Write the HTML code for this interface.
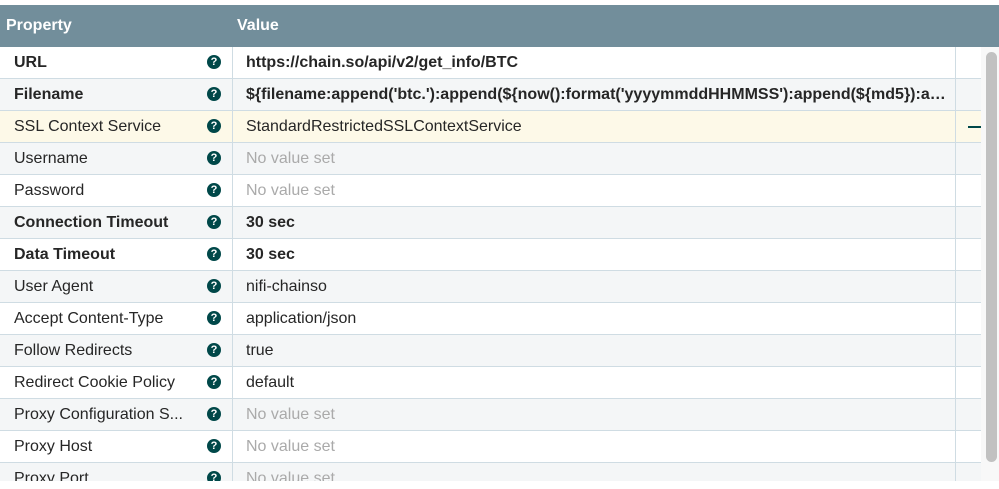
<!DOCTYPE html>
<html><head><style>
body{margin:0;width:999px;height:489px;overflow:hidden;background:#fff;font-family:"Liberation Sans",sans-serif;}
.hd{position:absolute;left:0;top:5px;width:999px;height:42px;background:#728e9b;color:#fff;font-weight:bold;font-size:16px;}
.hd span{position:absolute;top:12px}
.row{position:absolute;left:0;width:981px;height:31px;border-bottom:1px solid #cfdce3;font-size:16px;color:#262626;}
.row.g{background:#f4f6f7}.row.y{background:#fdf9e8}
.row .n{position:absolute;left:14px;top:7px;white-space:nowrap}
.row .v{position:absolute;left:246px;top:7px;white-space:nowrap;width:708px;overflow:hidden;text-overflow:ellipsis}
.row .q{position:absolute;left:207px;top:8px;width:14px;height:14px;border-radius:50%;background:#004849;color:#fff;font-size:11px;font-weight:bold;text-align:center;line-height:14px}
.b{font-weight:bold}.nv{color:#aaa}
.c1{position:absolute;left:232px;top:47px;width:1px;height:434px;background:#cfdce3}
.c2{position:absolute;left:955px;top:47px;width:1px;height:434px;background:#cfdce3}
.sb{position:absolute;left:981px;top:47px;width:18px;height:434px;background:#f8f8f8}
.th{position:absolute;left:986px;top:52px;width:11px;height:410px;border-radius:6px;background:#c1c1c1}
</style></head><body>
<div class="hd"><span style="left:6px">Property</span><span style="left:237px">Value</span></div>
<div class="row" style="top:47px"><span class="n b">URL</span><span class="q">?</span><span class="v b">https://chain.so/api/v2/get_info/BTC</span></div>
<div class="row g" style="top:79px"><span class="n b">Filename</span><span class="q">?</span><span class="v b">${filename:append('btc.'):append(${now():format('yyyymmddHHMMSS'):append(${md5}):append(${md5}):append(</span></div>
<div class="row y" style="top:111px"><span class="n">SSL Context Service</span><span class="q">?</span><span class="v">StandardRestrictedSSLContextService</span><span style="position:absolute;left:968px;top:15px;width:13px;height:2px;background:#004849"></span></div>
<div class="row g" style="top:143px"><span class="n">Username</span><span class="q">?</span><span class="v nv">No value set</span></div>
<div class="row" style="top:175px"><span class="n">Password</span><span class="q">?</span><span class="v nv">No value set</span></div>
<div class="row g" style="top:207px"><span class="n b">Connection Timeout</span><span class="q">?</span><span class="v b">30 sec</span></div>
<div class="row" style="top:239px"><span class="n b">Data Timeout</span><span class="q">?</span><span class="v b">30 sec</span></div>
<div class="row g" style="top:271px"><span class="n">User Agent</span><span class="q">?</span><span class="v">nifi-chainso</span></div>
<div class="row" style="top:303px"><span class="n">Accept Content-Type</span><span class="q">?</span><span class="v">application/json</span></div>
<div class="row g" style="top:335px"><span class="n">Follow Redirects</span><span class="q">?</span><span class="v">true</span></div>
<div class="row" style="top:367px"><span class="n">Redirect Cookie Policy</span><span class="q">?</span><span class="v">default</span></div>
<div class="row g" style="top:399px"><span class="n">Proxy Configuration S...</span><span class="q">?</span><span class="v nv">No value set</span></div>
<div class="row" style="top:431px"><span class="n">Proxy Host</span><span class="q">?</span><span class="v nv">No value set</span></div>
<div class="row g" style="top:463px;height:18px;overflow:hidden;border:none"><span class="n">Proxy Port</span><span class="q">?</span><span class="v nv">No value set</span></div>
<div class="c1"></div><div class="c2"></div>
<div class="sb"></div><div class="th"></div>
</body></html>
